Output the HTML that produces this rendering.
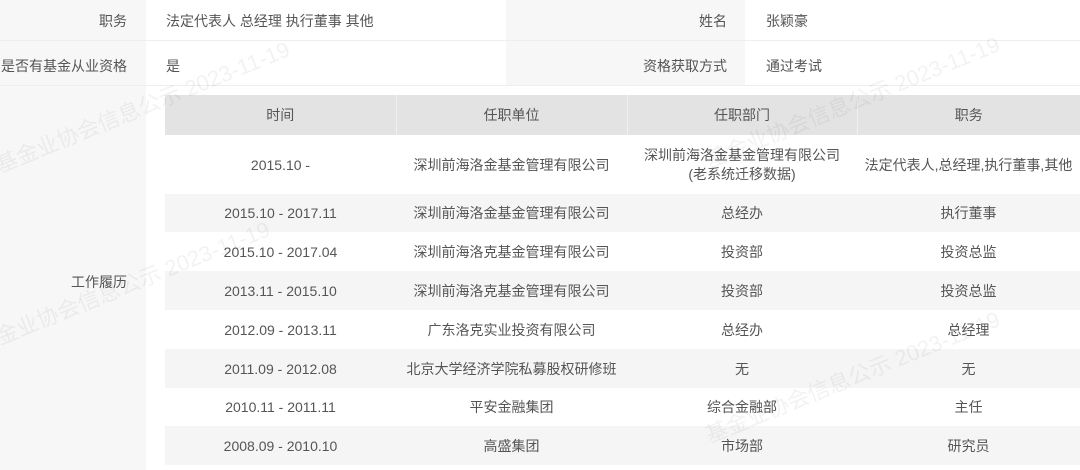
<!DOCTYPE html>
<html><head><meta charset="utf-8"><style>
body{margin:0;width:1080px;height:470px;overflow:hidden;background:#fff;font-family:"Liberation Sans","Noto Sans CJK SC",sans-serif;font-size:14px;color:#555;position:relative}
.a{position:absolute}
.lab{background:#f7f7f7}
.t{position:absolute;white-space:nowrap}
table{position:absolute;left:165px;top:95px;width:915px;border-collapse:collapse;table-layout:fixed}
td,th{text-align:center;font-weight:normal;padding:0;color:#555;font-size:14px}
th{background:#e3e3e3;height:40px;border-right:1px solid #f0f0f0}
tr.g td{background:#f5f5f5}
.wm{position:absolute;color:rgba(0,0,0,0.05);font-size:22px;transform:rotate(-22deg);transform-origin:left top;white-space:nowrap}
</style></head><body>
<div class="a lab" style="left:0;top:0;width:146px;height:470px"></div>
<div class="a lab" style="left:506px;top:0;width:239px;height:85px"></div>
<div class="a" style="left:0;top:40px;width:1080px;height:1px;background:#eee"></div>
<div class="a" style="left:0;top:85px;width:1080px;height:1px;background:#eee"></div>
<div class="t" style="right:953px;top:11px">职务</div>
<div class="t" style="left:166px;top:11px">法定代表人 总经理 执行董事 其他</div>
<div class="t" style="right:953px;top:56px">是否有基金从业资格</div>
<div class="t" style="left:166px;top:56px">是</div>
<div class="t" style="right:353px;top:11px">姓名</div>
<div class="t" style="left:766px;top:11px">张颖豪</div>
<div class="t" style="right:353px;top:56px">资格获取方式</div>
<div class="t" style="left:766px;top:56px">通过考试</div>
<div class="t" style="right:953px;top:272px">工作履历</div>
<table>
<colgroup><col style="width:231px"><col style="width:231px"><col style="width:230px"><col style="width:223px"></colgroup>
<tr><th>时间</th><th>任职单位</th><th>任职部门</th><th style="border:none">职务</th></tr>
<tr style="height:59px"><td>2015.10 -</td><td>深圳前海洛金基金管理有限公司</td><td style="line-height:19px">深圳前海洛金基金管理有限公司<br>(老系统迁移数据)</td><td>法定代表人,总经理,执行董事,其他</td></tr>
<tr class="g" style="height:38px"><td>2015.10 - 2017.11</td><td>深圳前海洛金基金管理有限公司</td><td>总经办</td><td>执行董事</td></tr>
<tr style="height:39px"><td>2015.10 - 2017.04</td><td>深圳前海洛克基金管理有限公司</td><td>投资部</td><td>投资总监</td></tr>
<tr class="g" style="height:39px"><td>2013.11 - 2015.10</td><td>深圳前海洛克基金管理有限公司</td><td>投资部</td><td>投资总监</td></tr>
<tr style="height:39px"><td>2012.09 - 2013.11</td><td>广东洛克实业投资有限公司</td><td>总经办</td><td>总经理</td></tr>
<tr class="g" style="height:39px"><td>2011.09 - 2012.08</td><td>北京大学经济学院私募股权研修班</td><td>无</td><td>无</td></tr>
<tr style="height:38px"><td>2010.11 - 2011.11</td><td>平安金融集团</td><td>综合金融部</td><td>主任</td></tr>
<tr class="g" style="height:39px"><td>2008.09 - 2010.10</td><td>高盛集团</td><td>市场部</td><td>研究员</td></tr>
</table>
<div class="wm" style="left:-10px;top:150px">基金业协会信息公示 2023-11-19</div>
<div class="wm" style="left:-30px;top:330px">基金业协会信息公示 2023-11-19</div>
<div class="wm" style="left:700px;top:145px">基金业协会信息公示 2023-11-19</div>
<div class="wm" style="left:700px;top:420px">基金业协会信息公示 2023-11-19</div>
</body></html>
